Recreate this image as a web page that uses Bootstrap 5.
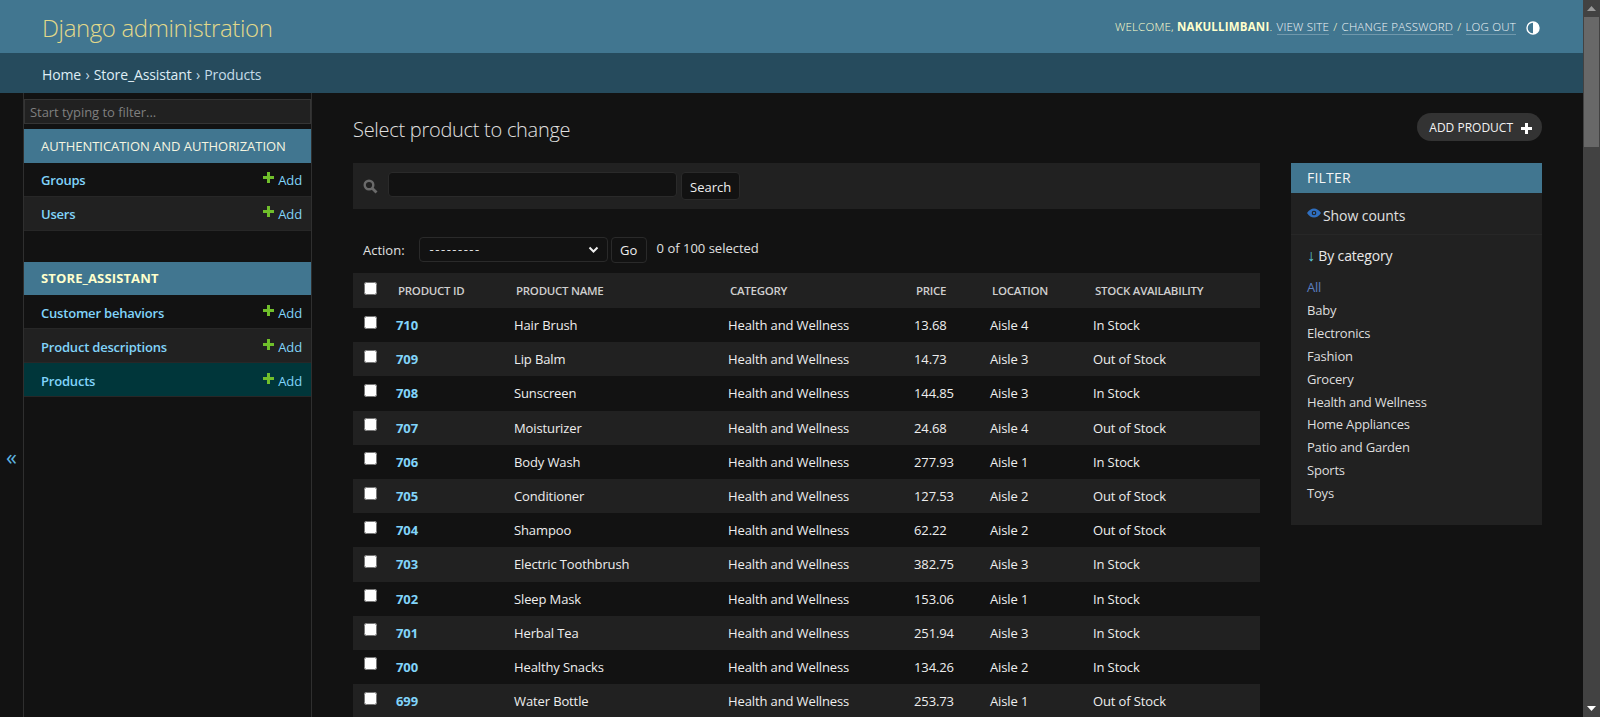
<!DOCTYPE html>
<html lang="en"><head><meta charset="utf-8"><title>Select product to change</title>
<link href="https://cdn.jsdelivr.net/npm/bootstrap@5.3.0/dist/css/bootstrap.min.css" rel="stylesheet">
<script src="https://cdn.jsdelivr.net/npm/bootstrap@5.3.0/dist/js/bootstrap.bundle.min.js"></script>
<style>
html,body{height:717px;overflow:hidden;margin:0}
body{background:#121212;color:#eee;font-family:"Open Sans","Liberation Sans",sans-serif;font-size:14px;line-height:1.4}
a{text-decoration:none;color:#81d4fa}
.pg{width:1583px;height:717px;overflow:hidden}
.top{height:53px;background:#417690;padding:2px 40px 0 42px;color:#ffc}
.brand{font-size:24px;font-weight:300;color:#e3d98a;letter-spacing:-.37px}
.tools{font-size:11.5px;font-weight:300;color:#ffc;letter-spacing:.2px;margin-right:3px}
.tools a{color:#f0f5f7;border-bottom:1px solid rgba(255,255,255,.25);margin:0 1px}
.tools b{font-weight:700;color:#ffc}
.tools svg{margin-left:9px}
.crumbs{height:40px;background:#264b5d;padding:3px 0 0 42px;color:#c4dce8;font-size:14px;font-weight:400;letter-spacing:-.12px;word-spacing:.8px}
.crumbs a{color:#dfeef5}
.tog{width:24px;height:624px;padding-top:102px;flex:none;border-right:1px solid #2f2f2f;color:#5fb4e0;font-size:22px;line-height:1}
.side{width:288px;height:624px;flex:none;border-right:1px solid #2f2f2f;padding-top:6px}
.flt{height:25px;width:100%;background:#212121;border:1px solid #353535;color:#7f7f7f;font-size:13px;padding:1px 5px 0;margin-bottom:5px;letter-spacing:-.05px;border-radius:0;line-height:22px}
.cap{background:#417690;color:#f5f5e0;height:34px;padding-left:17px;font-size:13px;letter-spacing:-.04px;width:287px}
.cap.cur{font-weight:700;letter-spacing:.13px;color:#ffc;height:33px}
.srow{height:34px;padding:2px 9px 0 17px;width:287px;border-bottom:1px solid #272727;font-size:13px}
.cap.cur~.srow{padding-top:4px}
.srow a.nm{font-weight:600;letter-spacing:-.2px}
.srow.alt{background:#212121}.srow.now{background:#00363a}
.addl{color:#81d4fa;font-weight:400;letter-spacing:-.1px}
.addl svg{margin-right:4px;position:relative;top:-4px}
.sp{height:31px}
.main{width:1229px;flex:none;padding:20px 0 0 40px;margin-left:1px}
.ttl{font-size:20px;font-weight:300;color:#e0e0e0;margin:0;padding-top:4px;letter-spacing:-.28px}
.addb{background:#333;color:#f2f2f2;border-radius:15px;height:28px;padding:2px 10px 0 12px;font-size:12px;letter-spacing:0}
.hd{height:30px;margin-bottom:20px}
.col1{width:907px;flex:none}
.tb{height:46px;background:#212121;padding:0 10px}
.sinp{width:289px;height:25px;background:#121212;border:1px solid #2a2a2a;border-radius:4px;margin:0 4px 4px 10px}
.gb{background:#121212;color:#eee;border:1px solid #2a2a2a;border-radius:4px;font-size:13px;--bs-btn-padding-y:0;--bs-btn-padding-x:8px;height:28px;line-height:1}
.tb .gb{padding-top:2px}
.act{height:64px;padding:28px 10px 0;color:#e0e0e0;font-size:13px}
.sel{width:189px;height:25px;background:#121212;border:1px solid #2a2a2a;border-radius:4px;margin-left:14px;padding:0 8px 0 10px;color:#e0e0e0}
.sel span{letter-spacing:1.5px}
.act .gb{margin:0 10px 0 3px;height:26px;width:36px;padding:0}
.cnt{position:relative;top:-2px}
.rt{width:907px;table-layout:fixed;border-collapse:separate;border-spacing:0;margin:0;--bs-table-bg:transparent;--bs-table-color:#eee;--bs-table-border-color:transparent}
.rt th,.rt td{padding:0 0 0 10px;vertical-align:middle;border:0;font-size:13px;color:#eee;box-shadow:none;background:transparent}
.rt thead th{background:#212121;height:35px;padding-top:2px;font-size:11.5px;font-weight:600;color:#cfcfcf;padding-left:12px;letter-spacing:-.28px}
.rt tbody td{height:34.2px;letter-spacing:-.12px}
.rt tbody tr:nth-child(even) td{background:#212121}
.rt td a{font-weight:700}
.rt .cb{width:33px;padding-left:11px!important}
.rt .cb input{width:13px;height:13px;margin:0;display:block;position:relative;top:-3px}
.c2{width:118px}.c3{width:214px}.c4{width:186px}.c5{width:76px}.c6{width:103px}
.fbox{width:250.7px;flex:none;margin-left:31px;background:#212121;height:362px;align-self:flex-start}
.fhead{background:#417690;height:30px;color:#f5f5f5;padding-left:16px;font-size:14px;font-weight:500;letter-spacing:.2px}
.fcnt{height:42px;border-bottom:1px solid #272727;padding:4px 0 0 16px;color:#e0e0e0;font-size:14px;letter-spacing:-.08px}
.fcnt svg{position:relative;top:-3px;margin-right:2px}
.fcat{padding:11px 0 0 16px;font-size:14px;color:#e8e8e8;letter-spacing:-.15px;margin-bottom:12.5px}
.fcat i{font-style:normal;color:#5fc8d8;font-size:16px;line-height:1}
.flist{padding:0 0 0 16px;margin:0;list-style:none;font-size:13px;letter-spacing:-.2px}
.flist li{height:22.9px}
.flist a{color:#dedede}.flist .on{color:#5b7fc0}
.sb{width:17px;flex:none;background:#424242;height:717px}
.sb u{display:block;height:130px;margin:0 1px;background:#686868}
.arr{height:17px}
</style></head>
<body class="d-flex">
<div class="pg">
<header class="top d-flex align-items-center justify-content-between">
<div class="brand">Django administration</div>
<div class="tools d-flex align-items-center"><span>WELCOME, <b>NAKULLIMBANI</b>. <a href="#">VIEW SITE</a> / <a href="#">CHANGE PASSWORD</a> / <a href="#">LOG OUT</a></span>
<svg width="14" height="14" viewBox="0 0 14 14"><circle cx="7" cy="7" r="6" fill="none" stroke="#fff" stroke-width="1.4"/><path d="M7 1a6 6 0 0 1 0 12z" fill="#fff"/></svg></div>
</header>
<div class="crumbs d-flex align-items-center"><span><a href="#">Home</a> › <a href="#">Store_Assistant</a> › Products</span></div>
<div class="d-flex">
<div class="tog d-flex align-items-center justify-content-center">«</div>
<nav class="side">
<div class="flt">Start typing to filter...</div>
<div class="cap d-flex align-items-center">AUTHENTICATION AND AUTHORIZATION</div>
<div class="srow d-flex align-items-center justify-content-between"><a class="nm" href="#">Groups</a><a class="addl" href="#"><svg width="11" height="11" viewBox="0 0 11 11"><path d="M4 0h3v4h4v3H7v4H4V7H0V4h4z" fill="#70bf2b"/></svg>Add</a></div>
<div class="srow alt d-flex align-items-center justify-content-between"><a class="nm" href="#">Users</a><a class="addl" href="#"><svg width="11" height="11" viewBox="0 0 11 11"><path d="M4 0h3v4h4v3H7v4H4V7H0V4h4z" fill="#70bf2b"/></svg>Add</a></div>
<div class="sp"></div>
<div class="cap cur d-flex align-items-center">STORE_ASSISTANT</div>
<div class="srow d-flex align-items-center justify-content-between"><a class="nm" href="#">Customer behaviors</a><a class="addl" href="#"><svg width="11" height="11" viewBox="0 0 11 11"><path d="M4 0h3v4h4v3H7v4H4V7H0V4h4z" fill="#70bf2b"/></svg>Add</a></div>
<div class="srow alt d-flex align-items-center justify-content-between"><a class="nm" href="#">Product descriptions</a><a class="addl" href="#"><svg width="11" height="11" viewBox="0 0 11 11"><path d="M4 0h3v4h4v3H7v4H4V7H0V4h4z" fill="#70bf2b"/></svg>Add</a></div>
<div class="srow now d-flex align-items-center justify-content-between"><a class="nm" href="#">Products</a><a class="addl" href="#"><svg width="11" height="11" viewBox="0 0 11 11"><path d="M4 0h3v4h4v3H7v4H4V7H0V4h4z" fill="#70bf2b"/></svg>Add</a></div>
</nav>
<main class="main">
<div class="hd d-flex align-items-center justify-content-between"><h1 class="ttl">Select product to change</h1>
<a class="addb d-flex align-items-center align-self-start" href="#">ADD PRODUCT<svg class="ms-2" width="11" height="11" viewBox="0 0 11 11"><path d="M4 0h3v4h4v3H7v4H4V7H0V4h4z" fill="#fff"/></svg></a></div>
<div class="d-flex">
<div class="col1">
<div class="tb d-flex align-items-center"><svg width="15" height="15" viewBox="0 0 15 15"><circle cx="6" cy="6" r="4.3" fill="none" stroke="#6a6a6a" stroke-width="2.4"/><path d="M9.2 9.2l4.3 4.3" stroke="#6a6a6a" stroke-width="2.8"/></svg><div class="sinp"></div><button class="btn gb" type="button">Search</button></div>
<div class="act d-flex align-items-start"><span class="mt-1">Action:</span>
<div class="sel d-flex align-items-center justify-content-between"><span>---------</span><svg width="11" height="8" viewBox="0 0 11 8"><path d="M1.5 1.5l4 4 4-4" fill="none" stroke="#eee" stroke-width="2"/></svg></div>
<button class="btn gb" type="button">Go</button><span class="cnt mt-1">0 of 100 selected</span></div>
<table class="table rt">
<thead><tr><th class="cb"><input type="checkbox" aria-label="all"></th><th class="c2">PRODUCT ID</th><th class="c3">PRODUCT NAME</th><th class="c4">CATEGORY</th><th class="c5">PRICE</th><th class="c6">LOCATION</th><th>STOCK AVAILABILITY</th></tr></thead>
<tbody>
<tr><td class="cb"><input type="checkbox" aria-label="710"></td><td><a href="#">710</a></td><td>Hair Brush</td><td>Health and Wellness</td><td>13.68</td><td>Aisle 4</td><td>In Stock</td></tr>
<tr><td class="cb"><input type="checkbox" aria-label="709"></td><td><a href="#">709</a></td><td>Lip Balm</td><td>Health and Wellness</td><td>14.73</td><td>Aisle 3</td><td>Out of Stock</td></tr>
<tr><td class="cb"><input type="checkbox" aria-label="708"></td><td><a href="#">708</a></td><td>Sunscreen</td><td>Health and Wellness</td><td>144.85</td><td>Aisle 3</td><td>In Stock</td></tr>
<tr><td class="cb"><input type="checkbox" aria-label="707"></td><td><a href="#">707</a></td><td>Moisturizer</td><td>Health and Wellness</td><td>24.68</td><td>Aisle 4</td><td>Out of Stock</td></tr>
<tr><td class="cb"><input type="checkbox" aria-label="706"></td><td><a href="#">706</a></td><td>Body Wash</td><td>Health and Wellness</td><td>277.93</td><td>Aisle 1</td><td>In Stock</td></tr>
<tr><td class="cb"><input type="checkbox" aria-label="705"></td><td><a href="#">705</a></td><td>Conditioner</td><td>Health and Wellness</td><td>127.53</td><td>Aisle 2</td><td>Out of Stock</td></tr>
<tr><td class="cb"><input type="checkbox" aria-label="704"></td><td><a href="#">704</a></td><td>Shampoo</td><td>Health and Wellness</td><td>62.22</td><td>Aisle 2</td><td>Out of Stock</td></tr>
<tr><td class="cb"><input type="checkbox" aria-label="703"></td><td><a href="#">703</a></td><td>Electric Toothbrush</td><td>Health and Wellness</td><td>382.75</td><td>Aisle 3</td><td>In Stock</td></tr>
<tr><td class="cb"><input type="checkbox" aria-label="702"></td><td><a href="#">702</a></td><td>Sleep Mask</td><td>Health and Wellness</td><td>153.06</td><td>Aisle 1</td><td>In Stock</td></tr>
<tr><td class="cb"><input type="checkbox" aria-label="701"></td><td><a href="#">701</a></td><td>Herbal Tea</td><td>Health and Wellness</td><td>251.94</td><td>Aisle 3</td><td>In Stock</td></tr>
<tr><td class="cb"><input type="checkbox" aria-label="700"></td><td><a href="#">700</a></td><td>Healthy Snacks</td><td>Health and Wellness</td><td>134.26</td><td>Aisle 2</td><td>In Stock</td></tr>
<tr><td class="cb"><input type="checkbox" aria-label="699"></td><td><a href="#">699</a></td><td>Water Bottle</td><td>Health and Wellness</td><td>253.73</td><td>Aisle 1</td><td>Out of Stock</td></tr>
</tbody></table>
</div>
<aside class="fbox">
<div class="fhead d-flex align-items-center">FILTER</div>
<div class="fcnt d-flex align-items-center"><svg width="14" height="10" viewBox="0 0 14 10"><path d="M0 5c2-3 4.500-4.500 7-4.500S12 2 14 5c-2 3-4.500 4.500-7 4.500S2 8 0 5z" fill="#2f6fc0"/><circle cx="7" cy="5" r="2.300" fill="#212121"/><circle cx="7" cy="5" r="1.200" fill="#2f6fc0"/></svg>Show counts</div>
<div class="fcat"><i>↓</i> By category</div>
<ul class="flist"><li><a class="on" href="#">All</a></li><li><a href="#">Baby</a></li><li><a href="#">Electronics</a></li><li><a href="#">Fashion</a></li><li><a href="#">Grocery</a></li><li><a href="#">Health and Wellness</a></li><li><a href="#">Home Appliances</a></li><li><a href="#">Patio and Garden</a></li><li><a href="#">Sports</a></li><li><a href="#">Toys</a></li></ul>
</aside>
</div>
</main>
</div>
</div>
<div class="sb d-flex flex-column"><div class="arr d-flex align-items-center justify-content-center"><svg width="9" height="5" viewBox="0 0 9 5"><path d="M4.500 0L9 5H0z" fill="#999"/></svg></div><u></u><div class="flex-grow-1"></div><div class="arr d-flex align-items-center justify-content-center"><svg width="9" height="5" viewBox="0 0 9 5"><path d="M0 0h9L4.500 5z" fill="#fff"/></svg></div></div>
</body></html>
